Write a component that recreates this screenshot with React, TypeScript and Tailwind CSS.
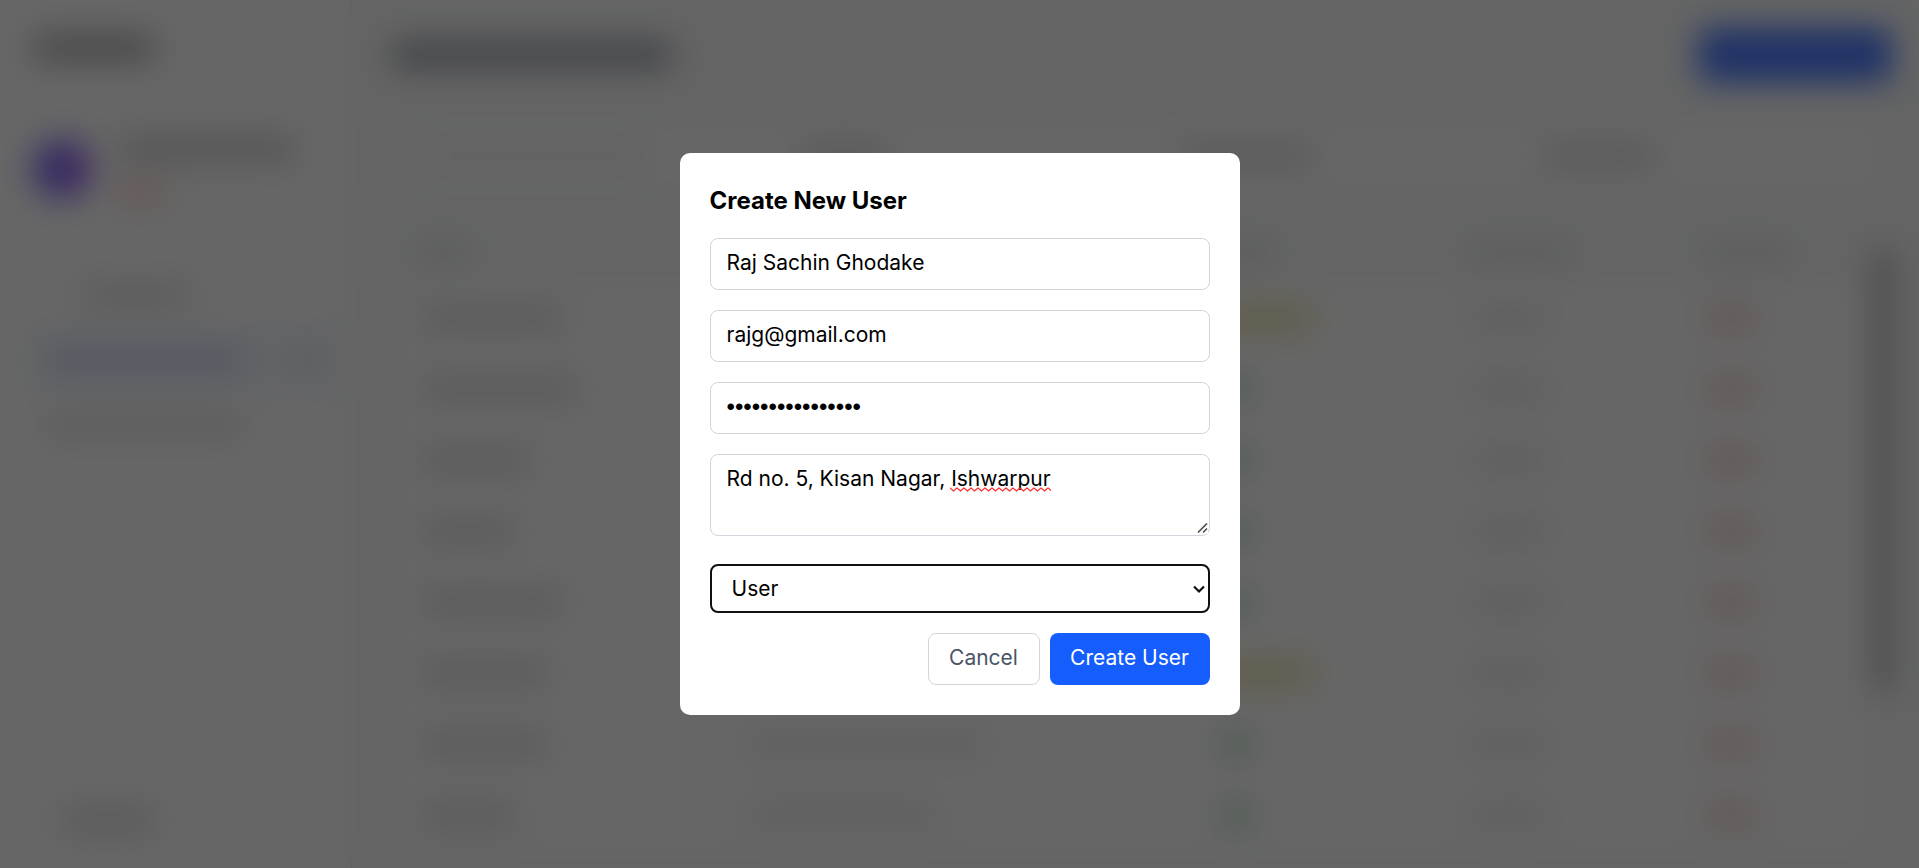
import { useState } from "react";

const rows = [
  { name: "w-36", email: "w-56", badge: "w-24 bg-[#eee2a8]" },
  { name: "w-40", email: "w-60", badge: "w-9 bg-[#bce0c8]" },
  { name: "w-28", email: "w-48", badge: "w-9 bg-[#bce0c8]" },
  { name: "w-24", email: "w-52", badge: "w-9 bg-[#bce0c8]" },
  { name: "w-36", email: "w-56", badge: "w-9 bg-[#bce0c8]" },
  { name: "w-32", email: "w-56", badge: "w-24 bg-[#eee2a8]" },
  { name: "w-32", email: "w-60", badge: "w-9 bg-[#bce0c8]" },
  { name: "w-24", email: "w-48", badge: "w-9 bg-[#bce0c8]" },
];

function Sidebar() {
  return (
    <aside className="flex w-[352px] shrink-0 flex-col border-r border-gray-200 bg-white px-8 pt-9 pb-9">
      <div className="h-6 w-[124px] rounded-full bg-[#ababab]" />
      <div className="mt-[77px] flex items-center gap-6">
        <div className="size-[60px] shrink-0 rounded-full bg-linear-to-r from-[#7078f8] to-[#a860f0]" />
        <div className="flex flex-col gap-5">
          <div className="h-6 w-[180px] rounded-full bg-[#d2d2d2]" />
          <div className="h-5 w-[52px] rounded-full bg-[#ffd4ce]" />
        </div>
      </div>
      <nav className="-mr-4 mt-[61px] flex flex-col">
        <div className="flex h-[65px] items-center pl-12">
          <div className="h-5 w-[110px] rounded-full bg-[#dfdfdf]" />
        </div>
        <div className="flex h-[65px] items-center justify-between rounded-lg bg-[#f4f8ff] px-3">
          <div className="h-5 w-[200px] rounded-full bg-[#c8d5f3]" />
          <div className="h-5 w-6 bg-[#dbe4f8]" />
        </div>
        <div className="flex h-[65px] items-center pl-3">
          <div className="h-5 w-[200px] rounded-full bg-[#e3e3e3]" />
        </div>
      </nav>
      <div className="mt-auto flex pl-7">
        <div className="h-6 w-[96px] rounded-full bg-[#dedede]" />
      </div>
    </aside>
  );
}

function UsersPage() {
  return (
    <main className="flex min-w-0 flex-1 flex-col bg-[#f9fafb] px-10 pt-7">
      <div className="flex items-center justify-between">
        <div className="h-7 w-[280px] rounded-lg bg-[#a6a9af]" />
        <div className="-mr-3 h-[54px] w-[192px] rounded-lg bg-[#4c7cff]" />
      </div>
      <div className="mt-10 grid h-[68px] grid-cols-[26fr_26fr_25fr_23fr] items-center rounded-lg bg-white pl-8">
        <div className="h-4 w-[220px] bg-[#eeeeee]" />
        <div className="h-5 w-[84px] bg-[#d6d6d6]" />
        <div className="h-5 w-[130px] bg-[#dadada]" />
        <div className="h-5 w-[110px] bg-[#d8d8d8]" />
      </div>
      <div className="-mr-3 mt-6 flex gap-2">
        <table className="w-full table-fixed bg-white">
          <thead className="bg-[#f9fafb]">
            <tr className="h-[68px]">
              <th className="w-[24%] pt-3 pl-7"><div className="h-4 w-12 bg-[#dcdfe2]" /></th>
              <th className="w-[32%] pt-3"><div className="h-4 w-14 bg-[#dcdfe2]" /></th>
              <th className="w-[17%] pt-3"><div className="h-4 w-14 bg-[#dcdfe2]" /></th>
              <th className="w-[16%] pt-3"><div className="h-4 w-[100px] bg-[#dfe1e3]" /></th>
              <th className="pt-3"><div className="h-4 w-[84px] bg-[#dfe1e3]" /></th>
            </tr>
          </thead>
          <tbody>
            {rows.map((row, i) => (
              <tr key={i} className="h-[71px] border-t border-gray-100">
                <td className="pl-7"><div className={`h-5 rounded-full bg-[#d9d9d9] ${row.name}`} /></td>
                <td><div className={`h-5 rounded-full bg-[#eaeaea] ${row.email}`} /></td>
                <td><div className={`h-6 rounded-full ${row.badge}`} /></td>
                <td><div className="h-5 w-20 rounded-full bg-[#eaeaea]" /></td>
                <td><div className="h-6 w-[52px] rounded-full bg-[#fbd6d6]" /></td>
              </tr>
            ))}
          </tbody>
        </table>
        <div className="mt-9 h-[440px] w-4 shrink-0 bg-[#a8a8a8]" />
      </div>
    </main>
  );
}

const field =
  "block w-full rounded-lg border border-gray-300 bg-white px-4 pt-[9px] pb-[11px] leading-[30px] text-black outline-none";

function CreateUserDialog() {
  const [name, setName] = useState("Raj Sachin Ghodake");
  const [email, setEmail] = useState("rajg@gmail.com");
  const [password, setPassword] = useState("sixteen-chars-pw");
  const [address, setAddress] = useState("Rd no. 5, Kisan Nagar, Ishwarpur");
  const [role, setRole] = useState("User");

  return (
    <div className="fixed inset-0 flex items-center justify-center bg-black/60 backdrop-blur-lg">
      <div
        role="dialog"
        aria-modal="true"
        aria-labelledby="dialog-title"
        className="w-full max-w-[560px] rounded-[10px] bg-white p-[30px]"
      >
        <h2 id="dialog-title" className="mb-5 text-2xl leading-[35px] font-bold text-black">
          Create New User
        </h2>
        <form className="flex flex-col gap-5" onSubmit={(e) => e.preventDefault()}>
          <input aria-label="Name" className={`${field} text-[21px]`} value={name} onChange={(e) => setName(e.target.value)} />
          <input aria-label="Email" type="email" className={`${field} text-[21px]`} value={email} onChange={(e) => setEmail(e.target.value)} />
          <input
            aria-label="Password"
            type="password"
            className={`${field} h-[52px] font-['Liberation_Sans',sans-serif] text-2xl`}
            value={password}
            onChange={(e) => setPassword(e.target.value)}
          />
          <div className="relative mb-2">
            <textarea
              aria-label="Address"
              spellCheck={false}
              rows={2}
              className={`${field} h-[82px] resize text-[21px]`}
              value={address}
              onChange={(e) => setAddress(e.target.value)}
            />
            <svg className="pointer-events-none absolute top-[33px] left-[240px] h-[5px] w-[101px]" aria-hidden="true">
              <defs>
                <pattern id="squiggle" width="7" height="5" patternUnits="userSpaceOnUse">
                  <path d="M-1 0.2 L0 1 L3.5 4 L7 1 L8 0.2" fill="none" stroke="#ff2a2a" strokeWidth="1.3" />
                </pattern>
              </defs>
              <rect width="101" height="5" fill="url(#squiggle)" />
            </svg>
            <svg
              className="pointer-events-none absolute right-[2px] bottom-[2px] size-[11px] bg-white"
              viewBox="0 0 11 11"
              stroke="#505050"
              strokeWidth="1.7"
              aria-hidden="true"
            >
              <path d="M1 9.5 L10 0.5 M6 9.5 L10 5.5" />
            </svg>
          </div>
          <div className="relative">
            <select
              aria-label="Role"
              className="block h-[49px] w-full appearance-none rounded-lg border-2 border-[#101010] bg-white pr-10 pl-5 text-[21px] text-black outline-none"
              value={role}
              onChange={(e) => setRole(e.target.value)}
            >
              <option>User</option>
            </select>
            <svg
              className="pointer-events-none absolute top-[20px] right-[5px] h-[10px] w-[12px]"
              viewBox="0 0 12 10"
              fill="none"
              stroke="#101010"
              strokeWidth="2.2"
              aria-hidden="true"
            >
              <path d="M1 2.5 L6 7.5 L11 2.5" />
            </svg>
          </div>
          <div className="flex justify-end gap-[10px]">
            <button
              type="button"
              className="h-[52px] w-28 rounded-lg border border-gray-300 pb-[2px] text-[21px] text-gray-600"
            >
              Cancel
            </button>
            <button type="submit" className="h-[52px] w-40 rounded-lg bg-[#155dfc] pb-[2px] text-[21px] text-white">
              Create User
            </button>
          </div>
        </form>
      </div>
    </div>
  );
}

export default function App() {
  return (
    <div className="font-[Inter,'Noto_Sans',sans-serif]">
      <div className="flex h-screen overflow-hidden bg-white" aria-hidden="true">
        <Sidebar />
        <UsersPage />
      </div>
      <CreateUserDialog />
    </div>
  );
}
